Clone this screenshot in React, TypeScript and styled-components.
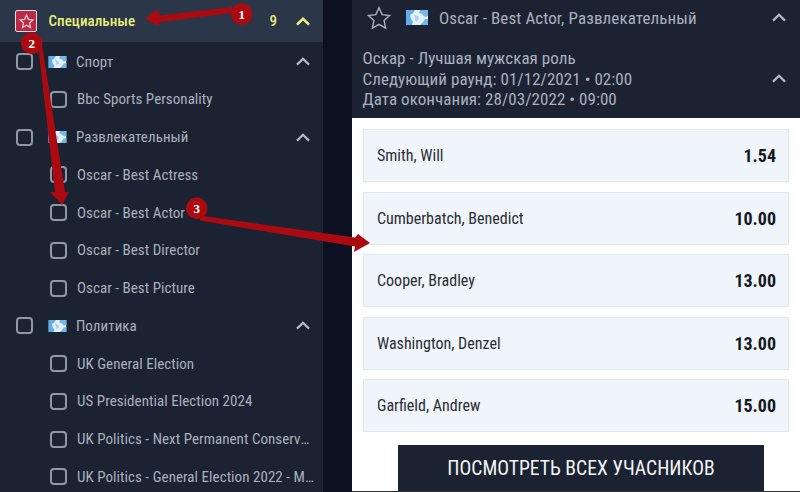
import React from "react";
import styled, { createGlobalStyle } from "styled-components";

const GlobalStyle = createGlobalStyle`
  html, body {
    margin: 0;
    padding: 0;
    height: 492px;
    overflow: hidden;
    background: #0b1120;
    font-family: Roboto, "Noto Sans", sans-serif;
    font-stretch: 75%;
  }
`;

interface SidebarItem {
  label: string;
  category?: boolean;
}

const sidebarItems: SidebarItem[] = [
  { label: "Спорт", category: true },
  { label: "Bbc Sports Personality" },
  { label: "Развлекательный", category: true },
  { label: "Oscar - Best Actress" },
  { label: "Oscar - Best Actor" },
  { label: "Oscar - Best Director" },
  { label: "Oscar - Best Picture" },
  { label: "Политика", category: true },
  { label: "UK General Election" },
  { label: "US Presidential Election 2024" },
  { label: "UK Politics - Next Permanent Conservative Leader" },
  { label: "UK Politics - General Election 2022 - Most Seats" },
];

const runners = [
  { name: "Smith, Will", odds: "1.54" },
  { name: "Cumberbatch, Benedict", odds: "10.00" },
  { name: "Cooper, Bradley", odds: "13.00" },
  { name: "Washington, Denzel", odds: "13.00" },
  { name: "Garfield, Andrew", odds: "15.00" },
];

const Chevron: React.FC<{ color?: string; width?: number }> = ({ color = "#b4bbc7", width = 2.2 }) => (
  <svg width="14" height="9" viewBox="0 0 14 9" fill="none">
    <path d="M1 7.6 7 1.8l6 5.8" stroke={color} strokeWidth={width} />
  </svg>
);

const Globe: React.FC<{ w: number; h: number }> = ({ w, h }) => (
  <svg width={w} height={h} viewBox="0 0 22 15">
    <rect width="22" height="15" fill="#e4f1fb" />
    <path d="M0 0h9L7 3 4 5l1 4 2 3-1 3H0z" fill="#63ade6" />
    <path d="M14 0h8v6l-3 1-3-3-3-1zM22 9v6h-8l3-3 2-3z" fill="#74b8ea" />
    <path d="M8 5l4 1 1 3-3 3-1-3z" fill="#a7d2f2" />
  </svg>
);

const Callouts: React.FC = () => (
  <Overlay viewBox="0 0 800 492">
    <g fill="#ab0a10">
      <path d="M232 7 160 15.500 157 9.500 145 18.500 158 26 160 22 232 13z" />
      <path d="M38 45 42 45 65 192 69 192 62 205 50 192 55 192z" />
      <path d="M200 215.500 355 237.500 358 234 370 243 354 252 355 246.500 200 220.500z" />
    </g>
    <Badge cx="241.700" cy="14" r="10.700" />
    <BadgeText x="241.700" y="18.500">1</BadgeText>
    <Badge cx="31.700" cy="43.300" r="10.700" />
    <BadgeText x="31.700" y="47.800">2</BadgeText>
    <Badge cx="196.700" cy="208.300" r="10.700" />
    <BadgeText x="196.700" y="212.800">3</BadgeText>
  </Overlay>
);

export default function App() {
  return (
    <Page>
      <GlobalStyle />
      <Sidebar>
        <SectionHeader>
          <StarTile>
            <svg width="17" height="17" viewBox="0 0 24 24" fill="none" stroke="#f0c9d0" strokeWidth="1.800">
              <path d="M12 3l2.700 6 6.300.7-4.700 4.300 1.300 6.500-5.600-3.300-5.600 3.300 1.300-6.500L3 9.700 9.300 9z" />
            </svg>
          </StarTile>
          <SectionTitle>Специальные</SectionTitle>
          <SectionCount>9</SectionCount>
          <Chevron color="#eef27e" width={2.600} />
        </SectionHeader>
        <SidebarList>
          {sidebarItems.map((item) => (
            <SidebarRow key={item.label} $category={item.category}>
              <Checkbox />
              {item.category && <Globe w={19} h={12} />}
              <RowLabel $category={item.category}>{item.label}</RowLabel>
              {item.category && <Chevron />}
            </SidebarRow>
          ))}
        </SidebarList>
      </Sidebar>
      <Main>
        <MainHeader>
          <EventRow>
            <svg width="26" height="26" viewBox="0 0 24 24" fill="none" stroke="#a9b1bf" strokeWidth="1.300">
              <path d="M12 2.500l2.900 6.400 6.900.8-5.100 4.700 1.400 6.900-6.100-3.500-6.100 3.500 1.400-6.900-5.100-4.700 6.900-.8z" />
            </svg>
            <Globe w={22} h={15} />
            <EventTitle>Oscar - Best Actor, Развлекательный</EventTitle>
            <Chevron />
          </EventRow>
          <MarketRow>
            <MarketInfo>
              <div>Оскар - Лучшая мужская роль</div>
              <div>Следующий раунд: 01/12/2021 • 02:00</div>
              <div>Дата окончания: 28/03/2022 • 09:00</div>
            </MarketInfo>
            <Chevron />
          </MarketRow>
        </MainHeader>
        <Content>
          <RunnerList>
            {runners.map((runner) => (
              <Runner key={runner.name}>
                <RunnerName>{runner.name}</RunnerName>
                <Odds>{runner.odds}</Odds>
              </Runner>
            ))}
          </RunnerList>
          <AllButton>ПОСМОТРЕТЬ ВСЕХ УЧАСНИКОВ</AllButton>
        </Content>
      </Main>
      <Callouts />
    </Page>
  );
}

const Page = styled.div`
  position: relative;
  width: 800px;
  height: 492px;
  display: flex;
  justify-content: space-between;
  overflow: hidden;
  background: #0b1120;
`;

const Sidebar = styled.aside`
  width: 323px;
  height: 492px;
  background: #1b2333;
  overflow: hidden;
`;

const SectionHeader = styled.div`
  height: 42px;
  display: flex;
  align-items: center;
  padding: 0 13px 0 15px;
  background: #2b3648;
  box-sizing: border-box;
`;

const StarTile = styled.div`
  width: 22px;
  height: 22px;
  box-sizing: border-box;
  display: flex;
  align-items: center;
  justify-content: center;
  background: #b92b44;
  border: 1px solid #d9dde3;
  border-radius: 2px;
`;

const SectionTitle = styled.div`
  flex: 1;
  margin-left: 11.500px;
  color: #e9f07a;
  font-size: 15px;
  font-weight: 500;
  letter-spacing: 0.05px;
`;

const SectionCount = styled.div`
  margin-right: 19px;
  color: #e9f07a;
  font-size: 15px;
  font-weight: 500;
`;

const SidebarList = styled.div`
  padding-top: 0.700px;
`;

const SidebarRow = styled.div<{ $category?: boolean }>`
  height: 37.750px;
  box-sizing: border-box;
  display: flex;
  align-items: center;
  gap: ${({ $category }) => ($category ? "15px" : "10px")};
  padding: 0 ${({ $category }) => ($category ? "13px" : "9px")} 0 ${({ $category }) => ($category ? "16px" : "50px")};
`;

const Checkbox = styled.span`
  flex: none;
  width: 17px;
  height: 17px;
  box-sizing: border-box;
  border: 2px solid #8f98a6;
  border-radius: 4px;
`;

const RowLabel = styled.span<{ $category?: boolean }>`
  flex: 1;
  min-width: 0;
  margin-left: ${({ $category }) => ($category ? "-6px" : "0")};
  color: #aab1bd;
  font-size: 15px;
  letter-spacing: 0.05px;
  white-space: nowrap;
  overflow: hidden;
  text-overflow: ellipsis;
`;

const Main = styled.main`
  width: 448px;
  height: 492px;
  display: flex;
  flex-direction: column;
  background: #fff;
`;

const MainHeader = styled.header`
  height: 118px;
  flex: none;
  background: #1b2333;
  color: #a9b1bf;
`;

const EventRow = styled.div`
  height: 35px;
  display: flex;
  align-items: center;
  gap: 14px;
  padding: 0 14px;
`;

const EventTitle = styled.div`
  flex: 1;
  min-width: 0;
  margin-left: -3px;
  font-size: 17px;
  letter-spacing: 0.1px;
`;

const MarketRow = styled.div`
  display: flex;
  align-items: center;
  justify-content: space-between;
  padding: 13px 14px 0 10.500px;
`;

const MarketInfo = styled.div`
  font-size: 17px;
  line-height: 20.500px;
  letter-spacing: 0.05px;
`;

const Content = styled.div`
  flex: 1;
  min-height: 0;
  display: flex;
  flex-direction: column;
  align-items: center;
  border-bottom: 1px solid #333;
`;

const RunnerList = styled.div`
  width: 426px;
  margin-top: 11px;
  display: flex;
  flex-direction: column;
  gap: 9.500px;
`;

const Runner = styled.div`
  height: 53px;
  box-sizing: border-box;
  display: flex;
  align-items: center;
  justify-content: space-between;
  padding: 0 12px 0 13px;
  background: #f0f4fb;
  border: 1px solid #e3e7ed;
`;

const RunnerName = styled.span`
  color: #2a2d33;
  font-size: 16px;
`;

const Odds = styled.span`
  color: #14181f;
  font-size: 18px;
  font-weight: 700;
`;

const AllButton = styled.div`
  width: 366px;
  height: 46px;
  flex: none;
  margin-top: 13px;
  margin-left: 10px;
  display: flex;
  align-items: center;
  justify-content: center;
  background: #1b2333;
  color: #f4f5f7;
  font-size: 19.600px;
  font-weight: 400;
`;

const Overlay = styled.svg`
  position: absolute;
  top: 0;
  left: 0;
  width: 800px;
  height: 492px;
  pointer-events: none;
`;

const Badge = styled.circle`
  fill: #ab0a10;
`;

const BadgeText = styled.text`
  fill: #fff;
  font-family: "Liberation Serif", serif;
  font-size: 13px;
  font-weight: 700;
  text-anchor: middle;
`;
